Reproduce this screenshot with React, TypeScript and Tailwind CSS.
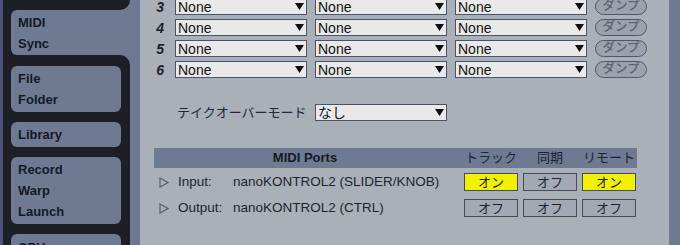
const font = { fontFamily: '"Liberation Sans", "Noto Sans CJK JP", sans-serif' };

function Triangle() {
  return (
    <svg width="9" height="7" viewBox="0 0 9 7" className="shrink-0">
      <polygon points="0,0 9,0 4.5,7" fill="#0d0f14" />
    </svg>
  );
}

function Select({ value, width = "w-[132px]" }: { value: string; width?: string }) {
  return (
    <div
      className={`${width} h-[17px] flex items-center justify-between bg-[#e9e9ea] border border-[#4a526a] pl-[2px] pr-[2px] shrink-0`}
    >
      <span className="text-[14px] leading-none text-[#111]">{value}</span>
      <Triangle />
    </div>
  );
}

function Tab({ lines, className = "" }: { lines: string[]; className?: string }) {
  return (
    <div className={`shrink-0 bg-[#6e7992] rounded-[6px] py-[2px] pl-[7px] ${className}`}>
      {lines.map((l) => (
        <div key={l} className="text-[13px] leading-[21px] font-bold text-[#141925]">
          {l}
        </div>
      ))}
    </div>
  );
}

function Sidebar() {
  return (
    <div className="flex w-[140px] shrink-0 h-full overflow-hidden">
      <div className="w-[3px] bg-[#4f5179]" />
      <div className="flex-1 flex flex-col bg-[#6e7992] overflow-hidden">
        {/* Top frame with rounded corner */}
        <div className="shrink-0 h-[10px] w-[127px] bg-[#1c1f26] rounded-br-[10px]" />
        {/* Selected tab */}
        <div className="shrink-0 bg-[#1c1f26]">
          <Tab lines={["MIDI", "Sync"]} className="ml-[8px] rounded-r-none h-[45px]" />
        </div>
        {/* Other tabs */}
        <div className="shrink-0 h-[200px] w-[127px] bg-[#1c1f26] rounded-tr-[10px] pl-[8px] pr-[9px] pt-[11px] flex flex-col gap-[10px]">
          <Tab lines={["File", "Folder"]} />
          <Tab lines={["Library"]} />
          <Tab lines={["Record", "Warp", "Launch"]} />
          <Tab lines={["CPU"]} className="pt-[3px]" />
        </div>
      </div>
    </div>
  );
}

function ToggleButton({ on, label }: { on: boolean; label: string }) {
  return (
    <div
      className={`w-[54px] h-[18px] flex items-center justify-center border border-[#454b5a] text-[13px] leading-none text-[#1c2130] ${
        on ? "bg-[#f0f000]" : "bg-[#a2a9b2]"
      }`}
    >
      {label}
    </div>
  );
}

function PortRow({ label, name, states }: { label: string; name: string; states: boolean[] }) {
  return (
    <div className="flex items-center h-[18px]">
      <div className="w-[310px] flex items-center pl-[5px]">
        <svg width="10" height="11" viewBox="0 0 10 11" className="shrink-0">
          <polygon points="1,1 9,5.5 1,10" fill="none" stroke="#5a6275" strokeWidth="1.2" />
        </svg>
        <span className="ml-[9px] w-[55px] text-[13.5px] text-[#1f2330]">{label}</span>
        <span className="text-[13.5px] text-[#1f2330] whitespace-nowrap">{name}</span>
      </div>
      <div className="flex gap-[5px]">
        {states.map((s, i) => (
          <ToggleButton key={i} on={s} label={s ? "オン" : "オフ"} />
        ))}
      </div>
    </div>
  );
}

export default function App() {
  const rows = [3, 4, 5, 6];
  return (
    <div className="w-[680px] h-[245px] flex overflow-hidden bg-[#6e7992]" style={font}>
      <Sidebar />
      <div className="w-[529px] h-full bg-[#a9b0b7] flex flex-col overflow-hidden">
        {/* Control surface rows */}
        <div className="mt-[-2px] pl-[14px] flex flex-col gap-[4px]">
          {rows.map((n) => (
            <div key={n} className="flex items-center h-[17px]">
              <span className="w-[10px] text-right text-[14px] font-bold italic text-[#1d2230] leading-none">
                {n}
              </span>
              <div className="ml-[11px] flex gap-[8px]">
                <Select value="None" />
                <Select value="None" />
                <Select value="None" />
              </div>
              <div className="ml-[8px] w-[52px] h-[17px] rounded-full border border-[#4e566e] bg-[#9ba2ac] flex items-center justify-center text-[12.5px] font-medium leading-none text-[#5c6371]">
                ダンプ
              </div>
            </div>
          ))}
        </div>

        {/* Takeover mode */}
        <div className="mt-[26px] flex items-center pl-[37px] h-[17px]">
          <span className="w-[138px] text-[13px] text-[#22273a] leading-none">テイクオーバーモード</span>
          <Select value="なし" />
        </div>

        {/* MIDI Ports */}
        <div className="mt-[27px] ml-[14px] w-[483px] flex flex-col">
          <div className="h-[20px] bg-[#6e7992] flex items-center">
            <div className="w-[310px] pr-[8px] text-center text-[13px] font-bold text-[#151a26]">
              MIDI Ports
            </div>
            <div className="flex gap-[5px] text-[13px] text-[#1f2433]">
              <span className="w-[54px] text-center">トラック</span>
              <span className="w-[54px] text-center">同期</span>
              <span className="w-[54px] text-center">リモート</span>
            </div>
          </div>
          <div className="mt-[5px] flex flex-col gap-[8px]">
            <PortRow label="Input:" name="nanoKONTROL2 (SLIDER/KNOB)" states={[true, false, true]} />
            <PortRow label="Output:" name="nanoKONTROL2 (CTRL)" states={[false, false, false]} />
          </div>
        </div>
      </div>
      <div className="flex-1 bg-[#6e7992]" />
    </div>
  );
}
